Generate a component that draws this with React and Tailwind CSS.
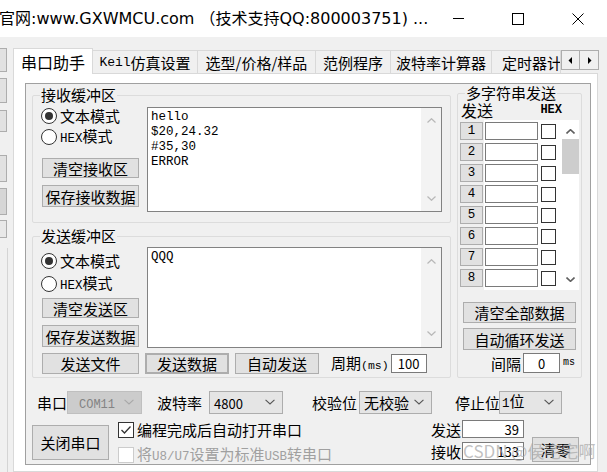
import React from "react";

const MONO = "font-['Liberation_Mono','Noto_Sans_CJK_SC',monospace]";

function Chevron({ up, color = "#b8b8b8", w = 9, h = 5, sw = 1.2 }) {
  return (
    <svg width={w} height={h} viewBox="0 0 9 5">
      <polyline
        points={up ? "0.5,4.5 4.5,0.7 8.5,4.5" : "0.5,0.5 4.5,4.3 8.5,0.5"}
        fill="none"
        stroke={color}
        strokeWidth={sw}
      />
    </svg>
  );
}

function Btn({ className = "", children }) {
  return (
    <div
      className={
        "flex items-center justify-center bg-[#e1e1e1] border border-[#adadad] text-[15px] leading-none whitespace-nowrap " +
        className
      }
    >
      {children}
    </div>
  );
}

function Radio({ checked, children }) {
  return (
    <div className="flex items-center h-[17px] gap-[3px] -ml-[1px]">
      <div className="w-[16px] h-[16px] rounded-full border border-[#333333] bg-white flex items-center justify-center">
        {checked && <div className="w-[8px] h-[8px] rounded-full bg-[#333333]" />}
      </div>
      <span className="text-[15px] leading-none whitespace-nowrap">{children}</span>
    </div>
  );
}

function Check({ checked, disabled }) {
  return (
    <div
      className={
        "w-[16px] h-[16px] bg-white border flex items-center justify-center " +
        (disabled ? "border-[#cccccc]" : "border-[#333333]")
      }
    >
      {checked && (
        <svg width="12" height="12" viewBox="0 0 12 12">
          <polyline points="1.5,6 4.5,9 10.5,2.5" fill="none" stroke="#333" strokeWidth="1.3" />
        </svg>
      )}
    </div>
  );
}

function TextBox({ lines, className = "", arrows = "py-[10px]" }) {
  return (
    <div className={"flex bg-white border border-[#828282] " + className}>
      <div className={"flex-1 pl-[3px] pt-[2px] text-[12.5px] leading-[15px] " + MONO}>
        {lines.map((l) => (
          <div key={l} className="whitespace-pre">{l}</div>
        ))}
      </div>
      <div className={"w-[20px] bg-[#f3f3f3] flex flex-col items-center justify-between " + arrows}>
        <Chevron up />
        <Chevron />
      </div>
    </div>
  );
}

function Combo({ className = "", disabled, children, pl = "pl-[4px]" }) {
  return (
    <div
      className={
        "h-[23px] flex items-center justify-between pr-[7px] border " +
        pl +
        " " +
        (disabled
          ? "bg-[#cccccc] border-[#bfbfbf] text-[#838383]"
          : "bg-[#e5e5e5] border-[#adadad]") +
        " " +
        className
      }
    >
      <span className="leading-none whitespace-nowrap">{children}</span>
      <Chevron color={disabled ? "#a8a8a8" : "#555555"} w={10} h={6} sw={1} />
    </div>
  );
}

function Tab({ className = "", children }) {
  return (
    <div
      className={
        "h-[23px] shrink-0 bg-[#f0f0f0] border-t border-r border-[#d9d9d9] flex items-center justify-center text-[15px] leading-none whitespace-nowrap overflow-hidden " +
        className
      }
    >
      {children}
    </div>
  );
}

function GroupBox({ label, className = "", legendClass = "text-[15px]", children }) {
  return (
    <fieldset className={"border border-[#dcdcdc] rounded-[2px] min-w-0 " + className}>
      <legend className={"ml-[7px] px-[1px] leading-[16px] " + legendClass}>{label}</legend>
      {children}
    </fieldset>
  );
}

export default function App() {
  const rows = [1, 2, 3, 4, 5, 6, 7, 8];
  return (
    <div className="w-[607px] h-[472px] overflow-hidden bg-[#f0f0f0] flex flex-col relative text-black font-['Noto_Sans_CJK_SC',sans-serif]">
      {/* title bar */}
      <div className="h-[37px] bg-white flex items-center shrink-0">
        <div className="w-[430px] overflow-hidden whitespace-nowrap">
          <span className="block -ml-[1px] text-[16px] leading-none whitespace-pre font-['DejaVu_Sans','Noto_Sans_CJK_SC',sans-serif]">
            官网:www.GXWMCU.com （技术支持QQ:800003751) ...
          </span>
        </div>
        <div className="w-[57px] flex justify-center">
          <div className="w-[11px] h-px bg-black" />
        </div>
        <div className="w-[62px] flex justify-center">
          <div className="w-[12px] h-[12px] border border-black" />
        </div>
        <div className="w-[58px] flex justify-center">
          <svg width="12" height="12" viewBox="0 0 12 12">
            <path d="M0.5 0.5 L11.5 11.5 M11.5 0.5 L0.5 11.5" stroke="black" strokeWidth="1" />
          </svg>
        </div>
      </div>

      <div className="flex flex-1 min-h-0">
        {/* window behind, left edge */}
        <div className="w-[13px] shrink-0 flex flex-col">
          <div className="w-[7px] h-[24px] mt-[11px] bg-[#e1e1e1] border border-l-0 border-[#adadad]" />
          <div className="w-[7px] h-[25px] mt-[6px] bg-[#e1e1e1] border border-l-0 border-[#adadad]" />
          <div className="w-[7px] h-[22px] mt-[7px] bg-[#e1e1e1] border border-l-0 border-[#adadad]" />
          <div className="w-[7px] h-[27px] mt-[23px] bg-[#e1e1e1] border border-l-0 border-[#adadad]" />
          <div className="w-[7px] h-[27px] mt-[6px] bg-[#d6d6d6] border border-l-0 border-[#adadad]" />
          <div className="w-[7px] h-[18px] mt-[5px] bg-[#e8e8e8] border border-l-0 border-[#adadad]" />
          <div className="w-[8px] flex-1 mt-[10px] border-r border-[#d4d4d4]" />
        </div>

        {/* tab control */}
        <div className="w-[585px] shrink-0 flex flex-col">
          <div className="h-[36px] flex items-end shrink-0">
            <div className="relative z-10 -mb-px w-[80px] h-[26px] shrink-0 bg-white border border-b-0 border-[#d9d9d9] flex items-center justify-center text-[16px] leading-none">
              串口助手
            </div>
            <Tab className="w-[105px]">
              <span className={"text-[13px] " + MONO}>Keil</span>仿真设置
            </Tab>
            <Tab className="w-[118px]">选型/价格/样品</Tab>
            <Tab className="w-[75px]">范例程序</Tab>
            <Tab className="w-[101px]">波特率计算器</Tab>
            <Tab className="w-[69px] justify-start pl-[10px]">定时器计算器</Tab>
            <div className="shrink-0 flex mb-[3px] h-[20px]">
              <div className="w-[19px] h-[20px] bg-[#f0f0f0] border border-[#adadad] flex items-center justify-center">
                <svg width="5" height="7" viewBox="0 0 5 7">
                  <polygon points="4,0 4,7 0.5,3.5" fill="black" />
                </svg>
              </div>
              <div className="w-[19px] h-[20px] bg-[#f0f0f0] border border-l-0 border-[#adadad] flex items-center justify-center">
                <svg width="5" height="7" viewBox="0 0 5 7">
                  <polygon points="1,0 1,7 4.5,3.5" fill="black" />
                </svg>
              </div>
            </div>
          </div>

          <div className="flex-1 bg-white border border-[#d9d9d9] pl-[11px] pt-[9px]">
            <div className="w-[566px] h-[382px] border border-[#a0a0a0] bg-[#f0f0f0] flex flex-col">
              <div className="flex items-start">
                {/* left column */}
                <div className="ml-[6px] mt-[3px] w-[419px] flex flex-col">
                  <GroupBox label="接收缓冲区" className="h-[136px]">
                    <div className="flex mt-[4px] pl-[9px]">
                      <div className="w-[97px] flex flex-col">
                        <Radio checked>文本模式</Radio>
                        <div className="mt-[4px]">
                          <Radio>
                            <span className={"text-[12.5px] " + MONO}>HEX</span>模式
                          </Radio>
                        </div>
                        <Btn className="mt-[13px] h-[20px]">清空接收区</Btn>
                        <Btn className="mt-[7px] h-[22px]">保存接收数据</Btn>
                      </div>
                      <TextBox
                        className="ml-[8px] w-[295px] h-[105px]"
                        lines={["hello", "$20,24.32", "#35,30", "ERROR"]}
                      />
                    </div>
                  </GroupBox>

                  <GroupBox label="发送缓冲区" className="mt-[5px] h-[150px]">
                    <div className="flex mt-[3px] pl-[9px]">
                      <div className="w-[97px] flex flex-col pt-[5px]">
                        <Radio checked>文本模式</Radio>
                        <div className="mt-[6px]">
                          <Radio>
                            <span className={"text-[12.5px] " + MONO}>HEX</span>模式
                          </Radio>
                        </div>
                        <Btn className="mt-[6px] h-[20px]">清空发送区</Btn>
                        <Btn className="mt-[7px] h-[22px]">保存发送数据</Btn>
                      </div>
                      <TextBox
                        className="ml-[8px] w-[295px] h-[101px]"
                        arrows="pt-[11px] pb-[11px]"
                        lines={["QQQ"]}
                      />
                    </div>
                    <div className="flex items-center mt-[5px] pl-[9px] h-[21px]">
                      <Btn className="w-[97px] h-[21px]">发送文件</Btn>
                      <Btn className="ml-[6px] w-[84px] h-[21px] border-2 border-[#0078d7]">发送数据</Btn>
                      <Btn className="ml-[6px] w-[84px] h-[21px]">自动发送</Btn>
                      <span className="ml-[12px] text-[15px] leading-none whitespace-nowrap">
                        周期<span className={"text-[11.5px] " + MONO}>(ms)</span>
                      </span>
                      <div className="ml-[2px] w-[36px] h-[19px] bg-white border border-[#7a7a7a] flex items-center justify-center text-[13px] leading-none">
                        100
                      </div>
                    </div>
                  </GroupBox>
                </div>

                {/* multi string send */}
                <GroupBox label="多字符串发送" className="ml-[6px] mt-[1px] w-[125px] h-[293px]">
                  <div className="flex justify-between items-center h-[17px] pl-[3px] pr-[19px]">
                    <span className="text-[16px] leading-none">发送</span>
                    <span className={"text-[12px] leading-none font-bold " + MONO}>HEX</span>
                  </div>
                  <div className="flex mt-[2px]">
                    <div className="ml-[2px] pt-[2px] flex flex-col gap-[3px]">
                      {rows.map((n) => (
                        <div
                          key={n}
                          className={
                            "w-[23px] h-[18px] bg-[#e1e1e1] border border-[#adadad] flex items-center justify-center text-[12.5px] leading-none " +
                            MONO
                          }
                        >
                          {n}
                        </div>
                      ))}
                    </div>
                    <div className="ml-[1px] w-[95px] h-[170px] bg-white flex">
                      <div className="pt-[2px] pl-[1px] flex flex-col gap-[3px]">
                        {rows.map((n) => (
                          <div key={n} className="flex items-center h-[18px]">
                            <div className="w-[53px] h-[18px] bg-white border border-[#7a7a7a]" />
                            <div className="ml-[3px] w-[15px] h-[15px] bg-white border border-[#333333]" />
                          </div>
                        ))}
                      </div>
                      <div className="ml-auto w-[17px] flex flex-col items-center">
                        <div className="mt-[9px]">
                          <Chevron up color="#606060" sw={1.6} />
                        </div>
                        <div className="mt-[5px] w-[17px] h-[35px] bg-[#cdcdcd]" />
                        <div className="mt-auto mb-[8px]">
                          <Chevron color="#606060" sw={1.6} />
                        </div>
                      </div>
                    </div>
                  </div>
                  <Btn className="ml-[5px] mt-[12px] w-[113px] h-[21px]">清空全部数据</Btn>
                  <Btn className="ml-[5px] mt-[5px] w-[113px] h-[22px]">自动循环发送</Btn>
                  <div className="flex items-center mt-[3px] h-[20px]">
                    <span className="ml-[33px] text-[15px] leading-none">间隔</span>
                    <div className="ml-[2px] w-[37px] h-[20px] bg-white border border-[#7a7a7a] flex items-center justify-center text-[13px] leading-none">
                      0
                    </div>
                    <span className={"ml-[3px] text-[10px] leading-none " + MONO}>ms</span>
                  </div>
                </GroupBox>
              </div>

              {/* serial port settings */}
              <div className="flex items-center mt-[12px] h-[24px] pl-[11px] text-[15px] whitespace-nowrap">
                <span className="w-[30px] leading-none">串口</span>
                <Combo disabled pl="pl-[11px]" className="w-[75px]">
                  <span className={"text-[12px] " + MONO}>COM11</span>
                </Combo>
                <span className="ml-[15px] w-[52px] leading-none">波特率</span>
                <Combo className="w-[74px]">
                  <span className="text-[13px]">4800</span>
                </Combo>
                <span className="ml-[29px] w-[47px] leading-none">校验位</span>
                <Combo className="w-[73px]">无校验</Combo>
                <span className="ml-[23px] w-[44px] shrink-0 leading-none whitespace-nowrap">停止位</span>
                <Combo pl="pl-[2px]" className="w-[63px]">
                  <span className={"text-[12.5px] " + MONO}>1</span>位
                </Combo>
              </div>

              <div className="flex items-start mt-[6px]">
                <Btn className="ml-[6px] mt-[5px] w-[77px] h-[35px]">关闭串口</Btn>
                <div className="ml-[9px] w-[313px] flex flex-col">
                  <div className="flex items-center h-[17px] mt-[1px]">
                    <Check checked />
                    <span className="ml-[3px] text-[15px] leading-none whitespace-nowrap">编程完成后自动打开串口</span>
                  </div>
                  <div className="flex items-center h-[17px] mt-[8px]">
                    <Check disabled />
                    <span className="ml-[3px] text-[15px] leading-none whitespace-nowrap text-[#a0a0a0]">
                      将<span className={"text-[12.5px] " + MONO}>U8/U7</span>设置为标准
                      <span className={"text-[12.5px] " + MONO}>USB</span>转串口
                    </span>
                  </div>
                </div>
                <div className="flex flex-col">
                  <div className="flex items-center h-[18px]">
                    <span className="w-[31px] text-[15px] leading-none">发送</span>
                    <div className="w-[62px] h-[18px] bg-white border border-[#7a7a7a] flex items-center justify-end pr-[4px] text-[13px] leading-none">
                      39
                    </div>
                  </div>
                  <div className="flex items-center h-[18px] mt-[4px]">
                    <span className="w-[31px] text-[15px] leading-none">接收</span>
                    <div className="w-[62px] h-[18px] bg-white border border-[#7a7a7a] flex items-center justify-end pr-[4px] text-[13px] leading-none">
                      133
                    </div>
                  </div>
                </div>
                <Btn className="ml-[8px] mt-[17px] w-[47px] h-[25px]">清零</Btn>
              </div>
            </div>
          </div>
        </div>
      </div>

      {/* watermark */}
      <div className="absolute left-[463px] top-[442px] text-[17px] leading-none whitespace-nowrap text-[#a6a6a6]/70 pointer-events-none">
        CSDN @侯宅宅啊
      </div>
    </div>
  );
}
